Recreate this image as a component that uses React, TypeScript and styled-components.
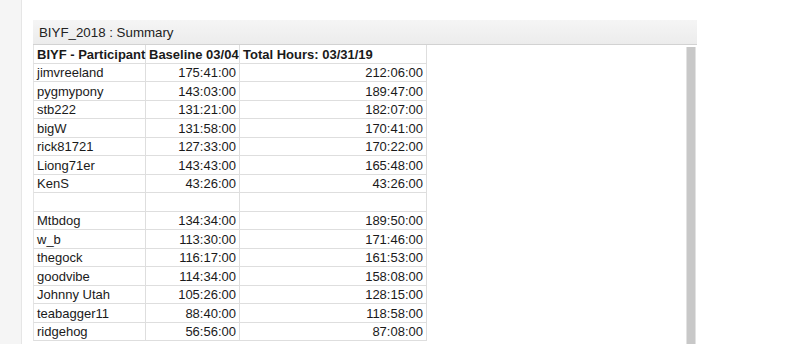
import * as React from 'react'
import styled, { createGlobalStyle } from 'styled-components'

const GlobalStyle = createGlobalStyle`
  html, body {
    margin: 0;
    padding: 0;
    background: #ffffff;
  }
  body {
    font-family: 'Liberation Sans', Arial, sans-serif;
    color: #1a1a1a;
  }
`

const Page = styled.div`
  display: flex;
  width: 800px;
  height: 344px;
  overflow: hidden;
`

const SideStrip = styled.div`
  width: 21px;
  flex-shrink: 0;
  background: #f5f5f5;
  border-right: 1px solid #e6e6e6;
`

const Main = styled.div`
  padding: 20px 0 0 11px;
`

const Panel = styled.div`
  width: 664px;
  display: flex;
  flex-direction: column;
`

const TitleBar = styled.div`
  height: 24px;
  display: flex;
  align-items: center;
  padding-left: 6px;
  font-size: 13.3px;
  color: #222;
  background: linear-gradient(#f5f5f5, #ececec);
  border-bottom: 1px solid #d2d2d2;
`

const Body = styled.div`
  display: flex;
  height: 300px;
`

const Sheet = styled.div`
  flex: 1;
  display: grid;
  grid-template-columns: 113px 94px 187px;
  grid-auto-rows: 18.5px;
  align-content: start;
`

const Cell = styled.div<{ $right?: boolean; $head?: boolean }>`
  box-sizing: border-box;
  display: flex;
  align-items: center;
  justify-content: ${p => (p.$right ? 'flex-end' : 'flex-start')};
  padding: 1px 3px 0 3px;
  font-size: 13px;
  font-weight: ${p => (p.$head ? 700 : 400)};
  height: ${p => (p.$head ? '19px' : '18.5px')};
  border-right: 1px solid #dedede;
  border-bottom: 1px solid #dedede;
  white-space: nowrap;
  &:nth-child(3n + 1) {
    border-left: 1px solid #e4e4e4;
  }
`

const ScrollTrack = styled.div`
  width: 8px;
  margin: 2px 1px 0 0;
  background: #c8c8c8;
  border-left: 1px solid #e2e2e2;
  border-right: 1px solid #e2e2e2;
`

const rows: [string, string, string][] = [
  ['jimvreeland', '175:41:00', '212:06:00'],
  ['pygmypony', '143:03:00', '189:47:00'],
  ['stb222', '131:21:00', '182:07:00'],
  ['bigW', '131:58:00', '170:41:00'],
  ['rick81721', '127:33:00', '170:22:00'],
  ['Liong71er', '143:43:00', '165:48:00'],
  ['KenS', '43:26:00', '43:26:00'],
  ['', '', ''],
  ['Mtbdog', '134:34:00', '189:50:00'],
  ['w_b', '113:30:00', '171:46:00'],
  ['thegock', '116:17:00', '161:53:00'],
  ['goodvibe', '114:34:00', '158:08:00'],
  ['Johnny Utah', '105:26:00', '128:15:00'],
  ['teabagger11', '88:40:00', '118:58:00'],
  ['ridgehog', '56:56:00', '87:08:00'],
]

const App = () => (
  <Page>
    <GlobalStyle />
    <SideStrip />
    <Main>
      <Panel>
        <TitleBar>BIYF_2018 : Summary</TitleBar>
        <Body>
          <Sheet>
            <Cell $head>BIYF - Participant</Cell>
            <Cell $head>Baseline 03/04</Cell>
            <Cell $head>Total Hours: 03/31/19</Cell>
            {rows.map((r, i) => (
              <React.Fragment key={i}>
                <Cell>{r[0]}</Cell>
                <Cell $right>{r[1]}</Cell>
                <Cell $right>{r[2]}</Cell>
              </React.Fragment>
            ))}
          </Sheet>
          <ScrollTrack />
        </Body>
      </Panel>
    </Main>
  </Page>
)

export default App
